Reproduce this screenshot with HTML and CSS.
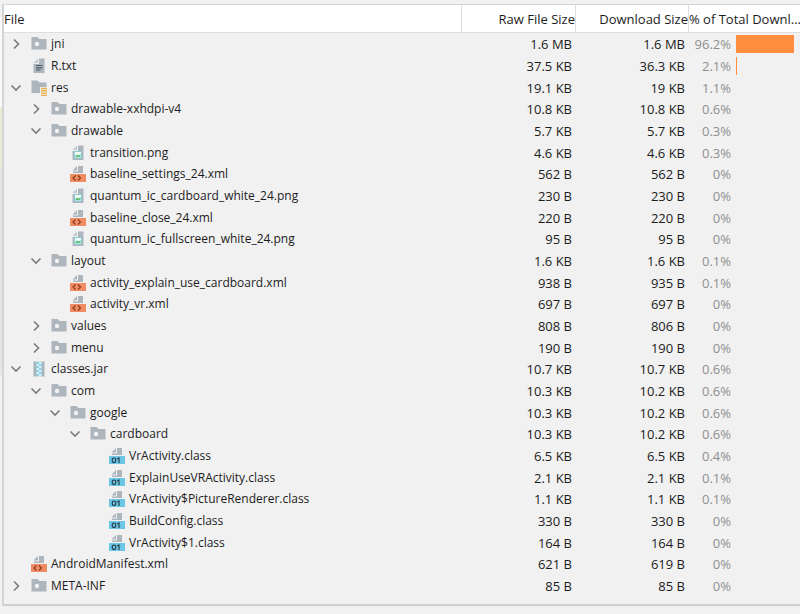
FILE: index.html
```
<!DOCTYPE html>
<html lang="en">

<head>
    <meta charset="UTF-8">
    <meta name="viewport" content="width=device-width, initial-scale=1.0">
    <title>APK Analyzer</title>
    <link rel="stylesheet" href="styles.css">
</head>

<body>

    <!-- Icon set shared by all rows -->
    <svg class="sprite" aria-hidden="true">
        <symbol id="right" viewBox="0 0 16 16"><path d="M6 3.5 L10.5 8 L6 12.5" fill="none" stroke="#7b7b7b" stroke-width="1.6"/></symbol>
        <symbol id="down" viewBox="0 0 16 16"><path d="M3.5 5.5 L8 10 L12.5 5.5" fill="none" stroke="#7b7b7b" stroke-width="1.6"/></symbol>
        <symbol id="folder" viewBox="0 0 16 16">
            <path d="M0.5 1 H6.5 L8.5 3 H15.5 V13.5 H0.5 Z" fill="#adb6bd"/>
            <circle cx="6" cy="8" r="2.2" fill="#f2f2f2"/>
        </symbol>
        <symbol id="res" viewBox="0 0 16 16">
            <path d="M0.5 0.5 H6.5 L8.5 2.5 H15.5 V7 H9 V13 H0.5 Z" fill="#adb6bd"/>
            <path d="M10 8.5 H17 M10 10.8 H17 M10 13.1 H17 M10 15.4 H17" stroke="#e5ae48" stroke-width="1.4"/>
        </symbol>
        <symbol id="text" viewBox="0 0 16 16">
            <path d="M8 0.5 H13.5 V15 H2.5 V6 H8 Z" fill="#adb6bd"/>
            <path d="M7 0.5 V5 H2.5 Z" fill="#c3cacf"/>
            <path d="M5 7.5 H11.5 M5 9.8 H11.5 M5 12 H9.5" stroke="#4c5a63" stroke-width="1.2"/>
        </symbol>
        <symbol id="image" viewBox="0 0 16 16">
            <path d="M8 0.5 H13.5 V15 H2.5 V6 H8 Z" fill="#adb6bd"/>
            <path d="M7 0.5 V5 H2.5 Z" fill="#c3cacf"/>
            <path d="M4.5 6.5 H11.5 V13 H4.5 Z" fill="#eefbf8" stroke="#86cbd6"/>
            <path d="M5.5 12 V10.5 L7.5 9.5 L9 10.5 L10.5 9 V12 Z" fill="#5fc17c"/>
        </symbol>
        <symbol id="xml" viewBox="0 0 16 16">
            <path d="M8 0 H13 V7 H3 V5.5 H8 Z" fill="#adb6bd"/>
            <path d="M7 0 V4.5 H2.5 Z" fill="#adb6bd"/>
            <path d="M0 8 H16 V16 H0 Z" fill="#f08c63"/>
            <path d="M5.5 9.5 L3 12 L5.5 14.5 M8 9.5 L10.5 12 L8 14.5" fill="none" stroke="#8a3a1e" stroke-width="1.2"/>
        </symbol>
        <symbol id="class" viewBox="0 0 16 16">
            <path d="M8 0 H13 V7 H3 V5.5 H8 Z" fill="#adb6bd"/>
            <path d="M7 0 V4.5 H2.5 Z" fill="#adb6bd"/>
            <path d="M0 8 H16 V16 H0 Z" fill="#6cc7e6"/>
            <ellipse cx="5" cy="12.2" rx="1.8" ry="2.2" fill="none" stroke="#29424f" stroke-width="1.2"/>
            <path d="M8 11 L10 10 V15" fill="none" stroke="#29424f" stroke-width="1.2"/>
        </symbol>
        <symbol id="jar" viewBox="0 0 16 16">
            <path d="M2.5 0.5 H13.5 V15.5 H2.5 Z" fill="#a6b4bc"/>
            <path d="M5.5 0.5 H10.5 V15.5 H5.5 Z" fill="#d8f2fa"/>
            <path d="M5.5 2 H8 M8 4 H10.5 M5.5 6 H8 M8 8 H10.5 M5.5 10 H8 M8 12 H10.5 M5.5 14 H8" stroke="#6fc3df" stroke-width="1.6"/>
        </symbol>
    </svg>

    <div class="panel">
        <table class="files">
            <thead>
                <tr>
                    <th class="col-file">File</th>
                    <th class="col-raw">Raw File Size</th>
                    <th class="col-download">Download Size</th>
                    <th class="col-percent">% of Total Downl...</th>
                </tr>
            </thead>
            <tbody>
                <tr>
                    <td><div class="node level-0"><button class="toggle" aria-label="Expand jni"><svg><use href="#right"/></svg></button><svg class="icon"><use href="#folder"/></svg>jni</div></td>
                    <td>1.6 MB</td><td>1.6 MB</td>
                    <td><div class="share"><span>96.2%</span><div class="track"><div class="bar" style="width: 96.2%"></div></div></div></td>
                </tr>
                <tr>
                    <td><div class="node level-0 leaf"><svg class="icon"><use href="#text"/></svg>R.txt</div></td>
                    <td>37.5 KB</td><td>36.3 KB</td>
                    <td><div class="share"><span>2.1%</span><div class="track"><div class="bar" style="width: 2.1%"></div></div></div></td>
                </tr>
                <tr>
                    <td><div class="node level-0"><button class="toggle" aria-label="Collapse res"><svg><use href="#down"/></svg></button><svg class="icon"><use href="#res"/></svg>res</div></td>
                    <td>19.1 KB</td><td>19 KB</td>
                    <td><div class="share"><span>1.1%</span></div></td>
                </tr>
                <tr>
                    <td><div class="node level-1"><button class="toggle" aria-label="Expand drawable-xxhdpi-v4"><svg><use href="#right"/></svg></button><svg class="icon"><use href="#folder"/></svg>drawable-xxhdpi-v4</div></td>
                    <td>10.8 KB</td><td>10.8 KB</td>
                    <td><div class="share"><span>0.6%</span></div></td>
                </tr>
                <tr>
                    <td><div class="node level-1"><button class="toggle" aria-label="Collapse drawable"><svg><use href="#down"/></svg></button><svg class="icon"><use href="#folder"/></svg>drawable</div></td>
                    <td>5.7 KB</td><td>5.7 KB</td>
                    <td><div class="share"><span>0.3%</span></div></td>
                </tr>
                <tr>
                    <td><div class="node level-2 leaf"><svg class="icon"><use href="#image"/></svg>transition.png</div></td>
                    <td>4.6 KB</td><td>4.6 KB</td>
                    <td><div class="share"><span>0.3%</span></div></td>
                </tr>
                <tr>
                    <td><div class="node level-2 leaf"><svg class="icon"><use href="#xml"/></svg>baseline_settings_24.xml</div></td>
                    <td>562 B</td><td>562 B</td>
                    <td><div class="share"><span>0%</span></div></td>
                </tr>
                <tr>
                    <td><div class="node level-2 leaf"><svg class="icon"><use href="#image"/></svg>quantum_ic_cardboard_white_24.png</div></td>
                    <td>230 B</td><td>230 B</td>
                    <td><div class="share"><span>0%</span></div></td>
                </tr>
                <tr>
                    <td><div class="node level-2 leaf"><svg class="icon"><use href="#xml"/></svg>baseline_close_24.xml</div></td>
                    <td>220 B</td><td>220 B</td>
                    <td><div class="share"><span>0%</span></div></td>
                </tr>
                <tr>
                    <td><div class="node level-2 leaf"><svg class="icon"><use href="#image"/></svg>quantum_ic_fullscreen_white_24.png</div></td>
                    <td>95 B</td><td>95 B</td>
                    <td><div class="share"><span>0%</span></div></td>
                </tr>
                <tr>
                    <td><div class="node level-1"><button class="toggle" aria-label="Collapse layout"><svg><use href="#down"/></svg></button><svg class="icon"><use href="#folder"/></svg>layout</div></td>
                    <td>1.6 KB</td><td>1.6 KB</td>
                    <td><div class="share"><span>0.1%</span></div></td>
                </tr>
                <tr>
                    <td><div class="node level-2 leaf"><svg class="icon"><use href="#xml"/></svg>activity_explain_use_cardboard.xml</div></td>
                    <td>938 B</td><td>935 B</td>
                    <td><div class="share"><span>0.1%</span></div></td>
                </tr>
                <tr>
                    <td><div class="node level-2 leaf"><svg class="icon"><use href="#xml"/></svg>activity_vr.xml</div></td>
                    <td>697 B</td><td>697 B</td>
                    <td><div class="share"><span>0%</span></div></td>
                </tr>
                <tr>
                    <td><div class="node level-1"><button class="toggle" aria-label="Expand values"><svg><use href="#right"/></svg></button><svg class="icon"><use href="#folder"/></svg>values</div></td>
                    <td>808 B</td><td>806 B</td>
                    <td><div class="share"><span>0%</span></div></td>
                </tr>
                <tr>
                    <td><div class="node level-1"><button class="toggle" aria-label="Expand menu"><svg><use href="#right"/></svg></button><svg class="icon"><use href="#folder"/></svg>menu</div></td>
                    <td>190 B</td><td>190 B</td>
                    <td><div class="share"><span>0%</span></div></td>
                </tr>
                <tr>
                    <td><div class="node level-0"><button class="toggle" aria-label="Collapse classes.jar"><svg><use href="#down"/></svg></button><svg class="icon"><use href="#jar"/></svg>classes.jar</div></td>
                    <td>10.7 KB</td><td>10.7 KB</td>
                    <td><div class="share"><span>0.6%</span></div></td>
                </tr>
                <tr>
                    <td><div class="node level-1"><button class="toggle" aria-label="Collapse com"><svg><use href="#down"/></svg></button><svg class="icon"><use href="#folder"/></svg>com</div></td>
                    <td>10.3 KB</td><td>10.2 KB</td>
                    <td><div class="share"><span>0.6%</span></div></td>
                </tr>
                <tr>
                    <td><div class="node level-2"><button class="toggle" aria-label="Collapse google"><svg><use href="#down"/></svg></button><svg class="icon"><use href="#folder"/></svg>google</div></td>
                    <td>10.3 KB</td><td>10.2 KB</td>
                    <td><div class="share"><span>0.6%</span></div></td>
                </tr>
                <tr>
                    <td><div class="node level-3"><button class="toggle" aria-label="Collapse cardboard"><svg><use href="#down"/></svg></button><svg class="icon"><use href="#folder"/></svg>cardboard</div></td>
                    <td>10.3 KB</td><td>10.2 KB</td>
                    <td><div class="share"><span>0.6%</span></div></td>
                </tr>
                <tr>
                    <td><div class="node level-4 leaf"><svg class="icon"><use href="#class"/></svg>VrActivity.class</div></td>
                    <td>6.5 KB</td><td>6.5 KB</td>
                    <td><div class="share"><span>0.4%</span></div></td>
                </tr>
                <tr>
                    <td><div class="node level-4 leaf"><svg class="icon"><use href="#class"/></svg>ExplainUseVRActivity.class</div></td>
                    <td>2.1 KB</td><td>2.1 KB</td>
                    <td><div class="share"><span>0.1%</span></div></td>
                </tr>
                <tr>
                    <td><div class="node level-4 leaf"><svg class="icon"><use href="#class"/></svg>VrActivity$PictureRenderer.class</div></td>
                    <td>1.1 KB</td><td>1.1 KB</td>
                    <td><div class="share"><span>0.1%</span></div></td>
                </tr>
                <tr>
                    <td><div class="node level-4 leaf"><svg class="icon"><use href="#class"/></svg>BuildConfig.class</div></td>
                    <td>330 B</td><td>330 B</td>
                    <td><div class="share"><span>0%</span></div></td>
                </tr>
                <tr>
                    <td><div class="node level-4 leaf"><svg class="icon"><use href="#class"/></svg>VrActivity$1.class</div></td>
                    <td>164 B</td><td>164 B</td>
                    <td><div class="share"><span>0%</span></div></td>
                </tr>
                <tr>
                    <td><div class="node level-0 leaf"><svg class="icon"><use href="#xml"/></svg>AndroidManifest.xml</div></td>
                    <td>621 B</td><td>619 B</td>
                    <td><div class="share"><span>0%</span></div></td>
                </tr>
                <tr>
                    <td><div class="node level-0"><button class="toggle" aria-label="Expand META-INF"><svg><use href="#right"/></svg></button><svg class="icon"><use href="#folder"/></svg>META-INF</div></td>
                    <td>85 B</td><td>85 B</td>
                    <td><div class="share"><span>0%</span></div></td>
                </tr>
            </tbody>
        </table>
    </div>

</body>

</html>
```
FILE: styles.css
```
body {
    margin: 0;
    padding-top: 4px;
    font-family: "Open Sans", "Noto Sans", sans-serif;
    font-size: 13px;
    line-height: 18px;
    color: #1c1c1c;
    background-color: #f1f1f1;
    /* Edge of the editor gutter left of the panel */
    background-image: linear-gradient(#f1f1f1 17px, #fafafa 17px 107px, #e9ebd6 107px 168px, #e6e6e6 168px 375px, #f1f1f1 375px);
    background-size: 2px 100%;
    background-repeat: no-repeat;
}

.sprite {
    display: none;
}

.panel {
    margin-left: 2px;
    padding-bottom: 7px;
    border-top: 1px solid #d4d4d4;
    border-left: 2px solid #d4d4d4;
    border-bottom: 2px solid #d0d0d0;
}

/* Table */

.files {
    width: 100%;
    border-collapse: separate;
    border-spacing: 0;
    table-layout: fixed;
}

th {
    height: 27px;
    padding: 0;
    font-weight: normal;
    text-align: right;
    white-space: nowrap;
    background-color: #fff;
    border-right: 1px solid #dedede;
    border-bottom: 1px solid #dedede;
}

.col-file {
    text-align: left;
}

.col-raw {
    width: 113px;
}

.col-download {
    width: 112px;
}

.col-percent {
    width: 111px;
    text-align: left;
    border-right: none;
}

td {
    height: 22px;
    padding: 0 4px 0 0;
    text-align: right;
    white-space: nowrap;
}

/* Every third row is a pixel shorter */

tr:nth-child(3n) td {
    height: 21px;
}

/* Tree nodes */

.node {
    display: flex;
    align-items: center;
    font-size: 12px;
}

.level-0 {
    padding-left: 4px;
}

.level-1 {
    padding-left: 24px;
}

.level-2 {
    padding-left: 43px;
}

.level-3 {
    padding-left: 63px;
}

.level-4 {
    padding-left: 82px;
}

.toggle {
    width: 16px;
    height: 16px;
    margin-right: 7px;
    padding: 0;
    border: none;
    background: none;
    cursor: pointer;
}

.toggle svg {
    display: block;
    width: 16px;
    height: 16px;
}

.icon {
    width: 16px;
    height: 16px;
    margin-right: 4px;
    overflow: visible;
}

.leaf .icon {
    margin-left: 23px;
}

/* Share of the total download */

.share {
    display: flex;
    align-items: center;
    gap: 5px;
    color: #8f8f8f;
}

.share span {
    width: 42px;
}

.track {
    flex: 1;
}

.bar {
    height: 18px;
    background-color: #ff8f3f;
}
```
